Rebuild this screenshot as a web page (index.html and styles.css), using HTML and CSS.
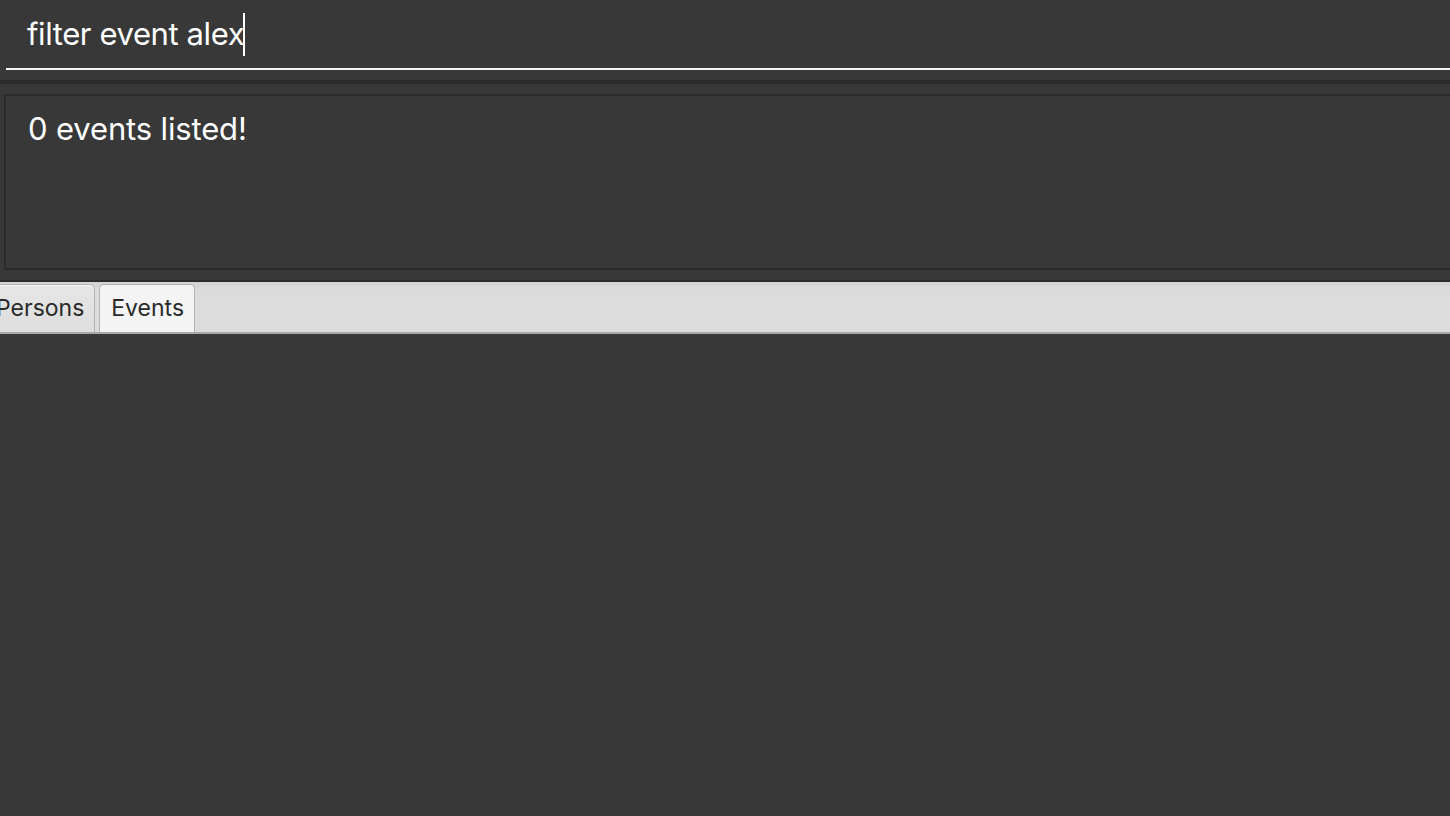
FILE: index.html
```html
<!DOCTYPE html>
<html lang="en">
<head>
    <meta charset="UTF-8">
    <title>Address App</title>
    <link rel="stylesheet" href="styles.css">
</head>
<body>
    <div class="command-box">
        <div class="command-input">filter event alex<span class="caret"></span></div>
    </div>
    <div class="divider"></div>
    <div class="result-display">
        <p class="result-text">0 events listed!</p>
    </div>
    <div class="divider thin"></div>
    <div class="tab-header">
        <div class="tab first">Persons</div>
        <div class="tab selected">Events</div>
    </div>
    <main class="list-area"></main>
</body>
</html>
```

FILE: styles.css
```css
body {
    margin: 0;
    padding: 0;
    background-color: #383838;
    font-family: Inter, "Open Sans", sans-serif;
    color: white;
    overflow: hidden;
    height: 816px;
}

.command-box {
    padding-left: 6px;
    padding-bottom: 10px;
}

.command-input {
    height: 68px;
    border-bottom: 2px solid #f5f5f5;
    padding-left: 21px;
    font-size: 31px;
    letter-spacing: -0.4px;
    line-height: 68px;
    display: flex;
    align-items: center;
    white-space: nowrap;
}

.caret {
    display: inline-block;
    width: 2px;
    height: 43px;
    background-color: white;
    margin-left: -1px;
}

.divider {
    height: 4px;
    background-color: #2b2b2b;
    margin-bottom: 10px;
}

.divider.thin {
    height: 2px;
    margin-bottom: 0;
    margin-top: 10px;
}

.result-display {
    margin-left: 4px;
    height: 172px;
    border: 2px solid #2a2a2a;
    border-right: none;
    padding-left: 22px;
}

.result-text {
    margin: 0;
    padding-top: 13px;
    font-size: 31px;
    letter-spacing: -0.15px;
    line-height: 40px;
}

.tab-header {
    display: flex;
    align-items: flex-end;
    gap: 4px;
    height: 52px;
    background: linear-gradient(#d2d2d2, #dcdcdc 8px);
    border-bottom: 2px solid #a9a9a9;
    box-sizing: border-box;
    padding-top: 2px;
}

.tab {
    height: 48px;
    box-sizing: border-box;
    padding: 0 10px 0 11px;
    font-size: 23px;
    line-height: 47px;
    color: #2a2a2a;
    background: linear-gradient(#e6e6e6, #dedede);
    border: 1px solid #b4b4b4;
    border-bottom: none;
    border-radius: 5px 5px 0 0;
    box-shadow: inset 0 1px 0 #f2f2f2;
}

.tab.first {
    margin-left: -16px;
}

.tab.selected {
    background: #f4f4f4;
}

.list-area {
    height: 482px;
}
```
